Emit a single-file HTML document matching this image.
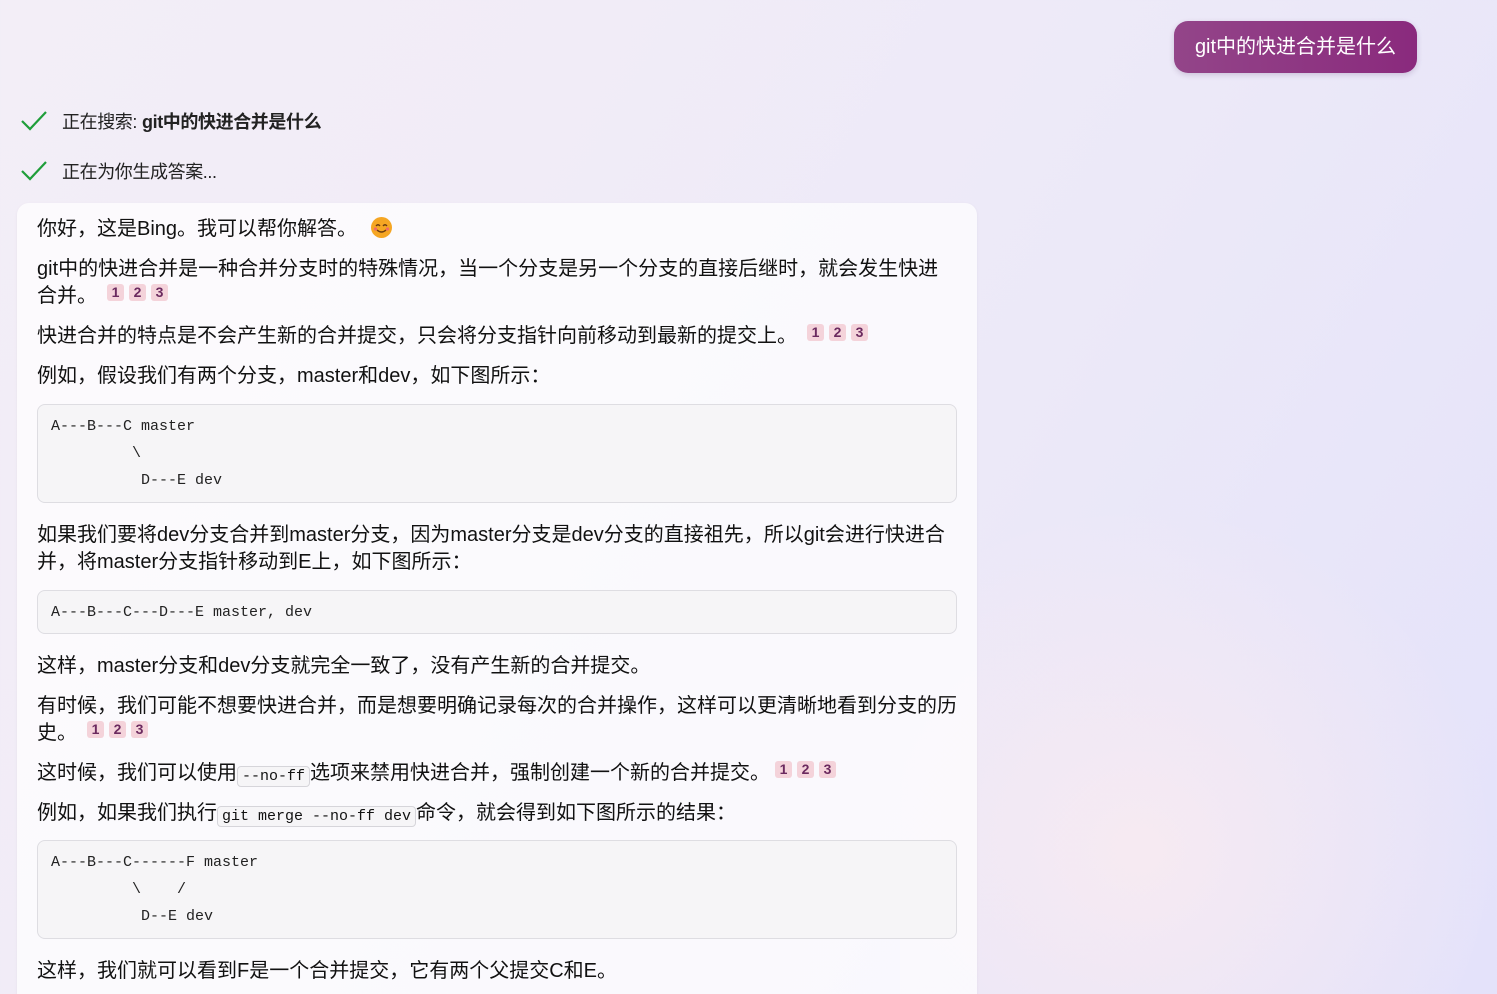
<!DOCTYPE html>
<html><head><meta charset="utf-8"><style>
*{box-sizing:border-box;margin:0;padding:0}
html,body{width:1497px;height:994px;overflow:hidden}
body{font-family:"Liberation Sans","Noto Sans CJK SC",sans-serif;color:#111;
background:linear-gradient(120deg,#f3eef7 0%,#f1ecf7 30%,#ece9f8 60%,#e4e2fa 100%);position:relative}
.glow{position:absolute;left:900px;top:500px;width:600px;height:500px;background:radial-gradient(ellipse at 40% 70%,rgba(250,235,240,.8),rgba(250,235,240,0) 70%)}
.user{position:absolute;left:1174px;top:21px;width:243px;height:52px;border-radius:14px;
background:linear-gradient(90deg,#934589,#8a2a7d);color:#fff;font-size:20px;line-height:52px;text-align:center;box-shadow:0 2px 6px rgba(80,40,100,.2)}
.st{position:absolute;left:20px;font-size:18px;color:#222;display:flex;align-items:center;letter-spacing:-.4px}
.st svg{margin-right:14px}
.card{position:absolute;left:17px;top:203px;width:960px;height:820px;background:rgba(255,255,255,.72);border-radius:12px;padding:13px 20px;box-shadow:0 1px 3px rgba(0,0,0,.05)}
p{font-size:20px;line-height:27px;margin-bottom:13px;letter-spacing:0}
.c{display:inline-block;width:17px;height:17px;background:#f4d3da;border-radius:3px;color:#6b2a5f;font-size:14px;font-weight:bold;line-height:17px;text-align:center;vertical-align:5px;margin-left:5px;letter-spacing:0}
.c:first-child{margin-left:10px}
pre{font-family:"Liberation Mono",monospace;font-size:15px;line-height:27px;background:#f6f5f7;border:1px solid #dedde2;border-radius:8px;padding:8px 13px;margin:14px 0 19px;color:#222}
code{font-family:"Liberation Mono",monospace;font-size:15px;line-height:1;background:#f6f5f7;border:1px solid #d6d5da;border-radius:4px;padding:2px 4px;letter-spacing:0;display:inline-block;vertical-align:-1px}
.emo{display:inline-block;width:21px;height:21px;border-radius:50%;background:#f5a623;vertical-align:-3px;margin-left:8px;position:relative}
</style></head><body>
<div class="glow"></div>
<div class="user">git中的快进合并是什么</div>
<div class="st" style="top:108px"><svg width="28" height="24" viewBox="0 0 28 24"><path d="M2 12 L10 20 L26 3" fill="none" stroke="#1f9e3a" stroke-width="2.2"/></svg>正在搜索: <b style="margin-left:5px">git中的快进合并是什么</b></div>
<div class="st" style="top:158px"><svg width="28" height="24" viewBox="0 0 28 24"><path d="M2 12 L10 20 L26 3" fill="none" stroke="#1f9e3a" stroke-width="2.2"/></svg>正在为你生成答案...</div>
<div class="card">
<p>你好，这是Bing。我可以帮你解答。 <span class="emo"><svg width="21" height="21" viewBox="0 0 21 21" style="position:absolute;left:0;top:0"><path d="M5 9 Q7 6.5 9 9 M12 9 Q14 6.5 16 9" stroke="#6b3b10" stroke-width="1.4" fill="none"/><path d="M6 13 Q10.5 17 15 13" stroke="#6b3b10" stroke-width="1.4" fill="none"/><circle cx="4.5" cy="12" r="1.6" fill="#f06a6a"/><circle cx="16.5" cy="12" r="1.6" fill="#f06a6a"/></svg></span></p>
<p>git中的快进合并是一种合并分支时的特殊情况，当一个分支是另一个分支的直接后继时，就会发生快进合并。<span class="c">1</span><span class="c">2</span><span class="c">3</span></p>
<p>快进合并的特点是不会产生新的合并提交，只会将分支指针向前移动到最新的提交上。<span class="c">1</span><span class="c">2</span><span class="c">3</span></p>
<p>例如，假设我们有两个分支，master和dev，如下图所示：</p>
<pre>A---B---C master
         \
          D---E dev</pre>
<p>如果我们要将dev分支合并到master分支，因为master分支是dev分支的直接祖先，所以git会进行快进合并，将master分支指针移动到E上，如下图所示：</p>
<pre style="padding:7.5px 13px">A---B---C---D---E master, dev</pre>
<p>这样，master分支和dev分支就完全一致了，没有产生新的合并提交。</p>
<p>有时候，我们可能不想要快进合并，而是想要明确记录每次的合并操作，这样可以更清晰地看到分支的历史。<span class="c">1</span><span class="c">2</span><span class="c">3</span></p>
<p>这时候，我们可以使用<code>--no-ff</code>选项来禁用快进合并，强制创建一个新的合并提交。<span class="c">1</span><span class="c">2</span><span class="c">3</span></p>
<p>例如，如果我们执行<code>git merge --no-ff dev</code>命令，就会得到如下图所示的结果：</p>
<pre style="margin-top:12px">A---B---C------F master
         \    /
          D--E dev</pre>
<p>这样，我们就可以看到F是一个合并提交，它有两个父提交C和E。</p>
</div>
</body></html>
